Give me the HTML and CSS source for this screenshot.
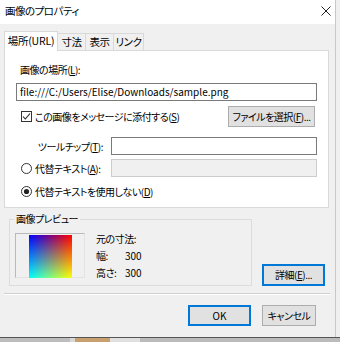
FILE: index.html
```html
<!DOCTYPE html>
<html lang="ja">
<head>
<meta charset="utf-8">
<title>画像のプロパティ</title>
<link rel="stylesheet" href="styles.css">
</head>
<body>
<div class="window">
  <div class="titlebar">
    <span class="title">画像のプロパティ</span>
    <svg class="close" width="10" height="10" viewBox="0 0 10 10"><path d="M0.5 0.5 L9.5 9.5 M9.5 0.5 L0.5 9.5" stroke="#222" stroke-width="1" fill="none"/></svg>
  </div>
  <div class="tabs">
    <div class="tab active">場所(URL)</div>
    <div class="tab">寸法</div>
    <div class="tab">表示</div>
    <div class="tab">リンク</div>
  </div>
  <div class="panel">
    <div class="label">画像の場所(<u>L</u>):</div>
    <div class="input url">file:///C:/Users/Elise/Downloads/sample.png</div>
    <div class="row attach">
      <div class="check-label">
        <svg class="checkbox" width="11" height="11" viewBox="0 0 11 11"><rect x="0.5" y="0.5" width="10" height="10" fill="#fff" stroke="#333"/><path d="M2 5.5 L4.3 8 L9 2.5" stroke="#222" stroke-width="1.1" fill="none"/></svg>
        <span>この画像をメッセージに添付する(<u>S</u>)</span>
      </div>
      <div class="btn file"><span>ファイルを選択(<u>F</u>)...</span></div>
    </div>
    <div class="row field tooltip">
      <div class="field-label right"><span>ツールチップ(<u>T</u>):</span></div>
      <div class="input wide"></div>
    </div>
    <div class="row field alt">
      <div class="field-label">
        <svg class="radio" width="11" height="11" viewBox="0 0 11 11"><circle cx="5.5" cy="5.5" r="5" fill="#fff" stroke="#333"/></svg>
        <span>代替テキスト(<u>A</u>):</span>
      </div>
      <div class="input wide disabled"></div>
    </div>
    <div class="row noalt">
      <svg class="radio" width="11" height="11" viewBox="0 0 11 11"><circle cx="5.5" cy="5.5" r="5" fill="#fff" stroke="#333"/><circle cx="5.5" cy="5.5" r="2.6" fill="#222"/></svg>
      <span>代替テキストを使用しない(<u>D</u>)</span>
    </div>
  </div>
  <div class="preview-row">
    <div class="group">
      <div class="legend">画像プレビュー</div>
      <div class="group-body">
        <div class="frame"><div class="gradient"></div></div>
        <div class="dims">
          <div class="dim-title">元の寸法:</div>
          <div class="dim"><span class="dk">幅:</span><span class="num">300</span></div>
          <div class="dim"><span class="dk">高さ:</span><span class="num">300</span></div>
        </div>
      </div>
    </div>
    <div class="btn detail focus"><span>詳細(<u>E</u>)...</span></div>
  </div>
  <div class="separator"></div>
  <div class="actions">
    <div class="btn ok focus"><span class="num">OK</span></div>
    <div class="btn cancel"><span>キャンセル</span></div>
  </div>
</div>
<div class="backdrop"></div>
</body>
</html>
```
FILE: styles.css
```css
* { box-sizing: border-box; }
html, body { margin: 0; padding: 0; }
body {
  width: 340px;
  height: 342px;
  overflow: hidden;
  background: #f0f0f0;
  font-family: "Noto Sans CJK JP", "Noto Sans", sans-serif;
  font-size: 10px;
  letter-spacing: -0.5px;
  font-feature-settings: "palt" 1;
  white-space: nowrap;
  color: #000;
}
u { text-decoration: underline; text-underline-offset: 1px; }
.num { letter-spacing: 0; }
.window {
  width: 336px;
  height: 337px;
  background: #f0f0f0;
  border-right: 1px solid #c8c8c8;
}
.titlebar {
  height: 24px;
  background: #fff;
  display: flex;
  align-items: center;
  justify-content: space-between;
  padding: 0 4px 2px 5px;
}
.title { font-size: 10.5px; line-height: 14px; }
.close { margin-right: 0; }
.tabs {
  display: flex;
  align-items: flex-end;
  margin-top: 7px;
  padding-left: 4px;
  height: 19px;
}
.tab {
  height: 17px;
  border: 1px solid #d9d9d9;
  border-bottom: none;
  margin-left: -1px;
  background: #f0f0f0;
  line-height: 15px;
  text-align: center;
  font-size: 10.5px;
}
.tab:nth-child(2) { width: 29px; }
.tab:nth-child(3) { width: 29px; }
.tab:nth-child(4) { width: 31px; }
.tab.active {
  height: 20px;
  margin-left: 0;
  width: 54px;
  background: #fff;
  position: relative;
  z-index: 1;
  margin-bottom: -1px;
  line-height: 18px;
  letter-spacing: -0.2px;
}
.panel {
  width: 325px;
  height: 158px;
  margin-left: 4px;
  background: #fff;
  border: 1px solid #d9d9d9;
  padding: 12px 11px 0 11px;
}
.label { line-height: 14px; padding-left: 4px; }
.input {
  height: 18px;
  border: 1px solid #7a7a7a;
  background: #fff;
  line-height: 16px;
  padding-left: 3px;
  overflow: hidden;
}
.url { margin-top: 6px; width: 301px; letter-spacing: 0; }
.row { display: flex; align-items: center; }
.attach { margin-top: 5px; justify-content: space-between; width: 299px; }
.check-label, .field-label, .noalt { display: flex; align-items: center; gap: 3px; padding-left: 5px; }
.btn {
  height: 21px;
  background: #e1e1e1;
  border: 1px solid #adadad;
  display: flex;
  align-items: center;
  justify-content: center;
  line-height: 14px;
}
.btn.focus { border: 2px solid #0078d7; }
.file { width: 87px; }
.field { justify-content: space-between; width: 301px; }
.tooltip { margin-top: 10px; }
.alt { margin-top: 4px; }
.field-label.right { padding-left: 0; width: 87px; justify-content: flex-end; }
.wide { width: 206px; }
.disabled { background: #f0f0f0; border-color: #cccccc; }
.noalt { margin-top: 7px; height: 14px; }
.preview-row {
  display: flex;
  align-items: flex-end;
  margin-top: 11px;
  padding-left: 9px;
  height: 67px;
}
.group {
  width: 243px;
  height: 67px;
  border: 1px solid #dcdcdc;
  position: relative;
  padding: 13px 5px 0 5px;
}
.legend {
  position: absolute;
  top: -8px;
  left: 4px;
  padding: 0 2px;
  background: #f0f0f0;
  line-height: 14px;
}
.group-body { display: flex; }
.frame {
  width: 70px;
  height: 45px;
  border: 1px solid #b9b9b9;
  border-right-color: #e3e3e3;
  border-bottom-color: #e3e3e3;
  background: #f0f0f0;
  display: flex;
  justify-content: center;
  padding-top: 1px;
}
.gradient {
  width: 43px;
  height: 43px;
  background: linear-gradient(to right, #0000ff, #ff0000), linear-gradient(to bottom, #000000, #00ff00);
  background-blend-mode: screen;
}
.dims { margin-left: 11px; margin-top: -1px; }
.dim-title { line-height: 14px; height: 17px; }
.dim { display: flex; line-height: 14px; height: 17px; }
.dk { width: 29px; }
.detail { width: 63px; height: 22px; margin-left: 10px; }
.separator {
  margin: 7px 0 0 4px;
  width: 326px;
  height: 2px;
  border-top: 1px solid #d0d0d0;
  border-bottom: 1px solid #fff;
}
.actions {
  display: flex;
  margin-top: 10px;
  padding-left: 188px;
  gap: 11px;
}
.ok { width: 63px; }
.cancel { width: 54px; }
.backdrop {
  height: 5px;
  border-top: 1px solid #555;
  background: linear-gradient(to right, #bdbdbd 0 70px, #d7d7d7 70px 75px, #c8a070 75px 110px, #e0e0e0 110px 140px, #bbb 140px);
}
```
